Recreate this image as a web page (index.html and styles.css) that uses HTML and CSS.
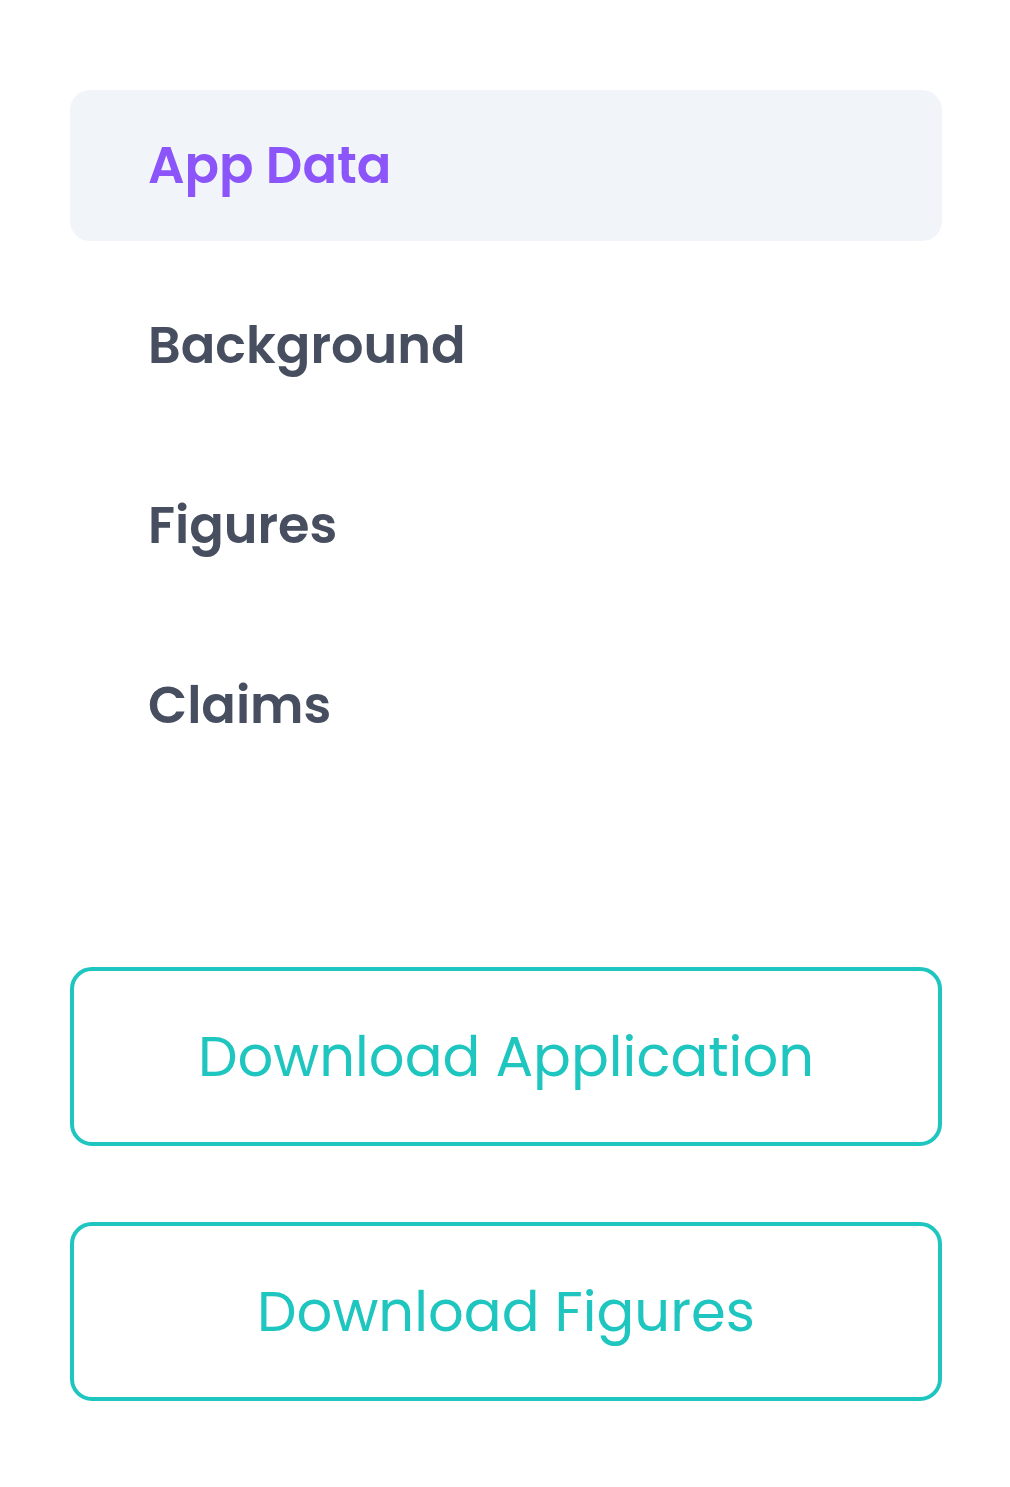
FILE: index.html
```html
<!DOCTYPE html>
<html lang="en">
<head>
<meta charset="utf-8">
<title>Sidebar</title>
<link rel="stylesheet" href="styles.css">
</head>
<body>
<div class="sidebar">
  <nav class="nav">
    <a class="nav-item active" href="#">App Data</a>
    <a class="nav-item" href="#">Background</a>
    <a class="nav-item" href="#">Figures</a>
    <a class="nav-item" href="#">Claims</a>
  </nav>
  <div class="actions">
    <button class="btn" type="button">Download Application</button>
    <button class="btn" type="button">Download Figures</button>
  </div>
</div>
</body>
</html>
```
FILE: styles.css
```css
html, body {
  margin: 0;
  padding: 0;
  background: #ffffff;
}
body {
  font-family: Poppins, Inter, "Noto Sans", sans-serif;
}
.sidebar {
  padding: 90px 68px 0 70px;
  display: flex;
  flex-direction: column;
}
.nav {
  display: flex;
  flex-direction: column;
  gap: 29px;
}
.nav-item {
  height: 151px;
  display: flex;
  align-items: center;
  padding-left: 78px;
  border-radius: 20px;
  font-size: 51px;
  font-weight: 600;
  color: #464e5f;
  text-decoration: none;
}
.nav-item.active {
  background: #f1f5f9;
  color: #8b55fa;
}
.actions {
  margin-top: 186px;
  display: flex;
  flex-direction: column;
  gap: 76px;
}
.btn {
  height: 179px;
  box-sizing: border-box;
  border: 4px solid #1fc6bf;
  border-radius: 22px;
  background: #ffffff;
  color: #1fc6bf;
  font-family: inherit;
  font-size: 56px;
  font-weight: 400;
  cursor: pointer;
}
```
